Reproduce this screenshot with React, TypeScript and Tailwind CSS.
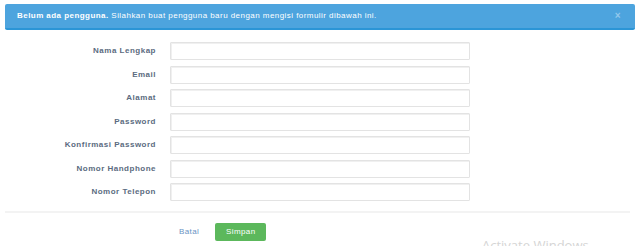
import React from 'react'

const fields = ['Nama Lengkap', 'Email', 'Alamat', 'Password', 'Konfirmasi Password', 'Nomor Handphone', 'Nomor Telepon']

export default function App() {
  return (
    <div className="relative h-[246px] w-[640px] overflow-hidden bg-white font-['Liberation_Sans',Arial,sans-serif]">
      <div className="ml-[5px] mr-[5px] mt-[4px] flex h-[26px] items-center justify-between rounded-[2px] border-b-2 border-[#2b95d6] bg-[#4da4de] pl-[12px] pr-[14px] text-[8px] tracking-[0.45px] text-white">
        <p>
          <span className="font-bold">Belum ada pengguna.</span> Silahkan buat pengguna baru dengan mengisi formulir dibawah ini.
        </p>
        <span className="text-[10px] font-bold leading-none text-[#93c8ec]">×</span>
      </div>

      <form className="mt-[12px] grid grid-cols-[156px_300px] gap-x-[14px] gap-y-[5.5px]">
        {fields.map((f) => (
          <React.Fragment key={f}>
            <label className="flex items-center justify-end text-[8px] font-bold tracking-[0.5px] text-[#5b6b80]">{f}</label>
            <input
              type={f.includes('Password') ? 'password' : 'text'}
              className="h-[18px] w-[300px] rounded-[1px] border border-[#e3e3e3] bg-white shadow-[inset_1px_1px_0_#f0f0f0] outline-none"
            />
          </React.Fragment>
        ))}
      </form>

      <div className="ml-[5px] mr-[10px] mt-[10px] h-[2px] bg-[#f3f3f3]" />

      <div className="ml-[179px] mt-[10px] flex items-center gap-[16px]">
        <a className="text-[8px] tracking-[0.4px] text-[#6a93c4]">Batal</a>
        <button type="button" className="h-[18px] w-[51px] rounded-[2px] bg-[#5cb85c] text-[8px] tracking-[0.4px] text-white">
          Simpan
        </button>
      </div>

      <div className="absolute left-[482px] top-[236px] font-['Open_Sans',sans-serif] text-[13px] text-[#d5d5d5]">Activate Windows</div>
    </div>
  )
}
